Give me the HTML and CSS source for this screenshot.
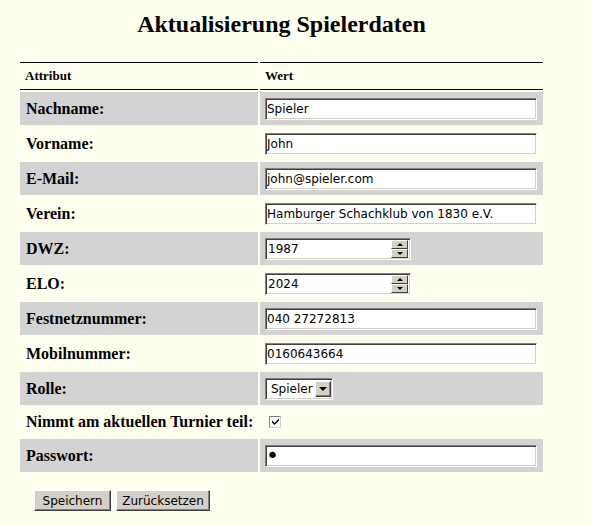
FILE: index.html
```html
<!DOCTYPE html>
<html lang="de">
<head>
<meta charset="utf-8">
<title>Aktualisierung Spielerdaten</title>
<link rel="stylesheet" href="styles.css">
</head>
<body>
<div class="page">
  <h1 class="title">Aktualisierung Spielerdaten</h1>
  <form class="form">
    <table class="data">
      <colgroup><col class="c1"><col class="c2"></colgroup>
      <thead>
        <tr><th>Attribut</th><th>Wert</th></tr>
      </thead>
      <tbody>
        <tr class="odd"><td class="lbl">Nachname:</td><td><input class="txt" type="text" value="Spieler"></td></tr>
        <tr><td class="lbl">Vorname:</td><td><input class="txt" type="text" value="John"></td></tr>
        <tr class="odd"><td class="lbl">E-Mail:</td><td><input class="txt" type="text" value="john@spieler.com"></td></tr>
        <tr><td class="lbl">Verein:</td><td><input class="txt" type="text" value="Hamburger Schachklub von 1830 e.V."></td></tr>
        <tr class="odd"><td class="lbl">DWZ:</td><td><span class="num"><input class="numin" type="text" value="1987"><span class="spin"><span class="sb"><span class="up"></span></span><span class="sb"><span class="dn"></span></span></span></span></td></tr>
        <tr><td class="lbl">ELO:</td><td><span class="num"><input class="numin" type="text" value="2024"><span class="spin"><span class="sb"><span class="up"></span></span><span class="sb"><span class="dn"></span></span></span></span></td></tr>
        <tr class="odd"><td class="lbl">Festnetznummer:</td><td><input class="txt" type="text" value="040 27272813"></td></tr>
        <tr><td class="lbl">Mobilnummer:</td><td><input class="txt" type="text" value="0160643664"></td></tr>
        <tr class="odd"><td class="lbl">Rolle:</td><td><span class="sel"><span class="selval">Spieler</span><span class="selbtn"><span class="dn"></span></span></span></td></tr>
        <tr class="short"><td class="lbl">Nimmt am aktuellen Turnier teil:</td><td><span class="chk"><svg width="9" height="9" viewBox="0 0 9 9"><path d="M1 3.5 L3.5 6 L8 1.5 L8 3.5 L3.5 8 L1 5.5 Z" fill="#000"/></svg></span></td></tr>
        <tr class="odd"><td class="lbl">Passwort:</td><td><input class="txt pw" type="password" value="x"></td></tr>
      </tbody>
    </table>
    <div class="actions">
      <button class="btn btn-save" type="button">Speichern</button>
      <button class="btn btn-reset" type="reset">Zurücksetzen</button>
    </div>
  </form>
</div>
</body>
</html>
```

FILE: styles.css
```css
html, body {
  margin: 0;
  padding: 0;
  background: #fffff0;
}
body {
  font-family: "Liberation Serif", "Times New Roman", serif;
  color: #000;
}
.page {
  margin-left: 18px;
  width: 527px;
}
.title {
  margin: 0;
  padding-top: 10px;
  height: 50px;
  box-sizing: border-box;
  font-size: 24px;
  line-height: 28px;
  font-weight: bold;
  text-align: center;
}
.form {
  margin: 10px 0 0 0;
}
.data {
  border-collapse: separate;
  border-spacing: 2px;
  width: 527px;
  table-layout: fixed;
}
.c1 { width: 238px; }
.c2 { width: 283px; }
.data th {
  box-sizing: border-box;
  height: 28px;
  padding: 0 5px;
  border-top: 1px solid #000;
  border-bottom: 1px solid #000;
  text-align: left;
  font-size: 13px;
  font-weight: bold;
  vertical-align: middle;
}
.data td {
  height: 33px;
  padding: 0 5px;
  vertical-align: middle;
}
.data tr.short td {
  height: 30px;
}
.data tr.odd td {
  background: #d3d3d3;
}
.data td.lbl {
  padding-left: 6px;
  font-size: 16px;
  font-weight: bold;
  white-space: nowrap;
}
.txt, .numin, .sel, .btn {
  font-family: "DejaVu Sans", Verdana, sans-serif;
  font-size: 12px;
}
.txt {
  display: block;
  box-sizing: border-box;
  width: 272px;
  height: 22px;
  margin: 0;
  padding: 1px 1px 0 1px;
  background: #fff;
  color: #000;
  border: 1px solid;
  border-color: #808080 #fff #fff #808080;
  box-shadow: inset 1px 1px 0 #404040, inset -1px -1px 0 #d4d0c8;
  outline: none;
}
.txt.pw {
  font-family: "DejaVu Sans", sans-serif;
  font-size: 22px;
  line-height: 18px;
  padding: 0 0 0 0;
}
.num {
  display: flex;
  box-sizing: border-box;
  width: 146px;
  height: 22px;
  background: #fff;
  border: 1px solid;
  border-color: #808080 #fff #fff #808080;
  box-shadow: inset 1px 1px 0 #404040, inset -1px -1px 0 #d4d0c8;
  padding: 1px;
}
.numin {
  flex: 1;
  min-width: 0;
  border: 0;
  margin: 0;
  padding: 1px 0 0 1px;
  background: transparent;
  outline: none;
  color: #000;
}
.spin {
  display: flex;
  flex-direction: column;
  justify-content: center;
  width: 17px;
  margin-right: 1px;
}
.sb {
  display: flex;
  align-items: center;
  justify-content: center;
  box-sizing: border-box;
  height: 9px;
  background: #d4d0c8;
  border: 1px solid;
  border-color: #fff #404040 #404040 #fff;
}
.up, .dn {
  width: 0;
  height: 0;
  border-left: 3px solid transparent;
  border-right: 3px solid transparent;
}
.up { border-bottom: 3px solid #000; }
.dn { border-top: 3px solid #000; }
.sel {
  display: inline-flex;
  box-sizing: border-box;
  height: 22px;
  padding: 1px;
  background: #fff;
  border: 1px solid;
  border-color: #808080 #fff #fff #808080;
  box-shadow: inset 1px 1px 0 #404040, inset -1px -1px 0 #d4d0c8;
  vertical-align: middle;
}
.selval {
  display: flex;
  align-items: center;
  padding: 1px 2px 0 4px;
  font-size: 12px;
}
.selbtn {
  display: flex;
  align-items: center;
  justify-content: center;
  box-sizing: border-box;
  width: 16px;
  height: 16px;
  margin-top: 1px;
  background: #d4d0c8;
  border: 1px solid;
  border-color: #fff #404040 #404040 #fff;
  box-shadow: inset -1px -1px 0 #808080;
}
.selbtn .dn {
  border-left-width: 4px;
  border-right-width: 4px;
  border-top-width: 4px;
}
.chk {
  display: flex;
  align-items: center;
  justify-content: center;
  box-sizing: border-box;
  width: 12px;
  height: 12px;
  margin-left: 4px;
  margin-top: -1px;
  background: #fff;
  border: 1px solid;
  border-color: #808080 #d4d0c8 #d4d0c8 #808080;
}
.actions {
  margin-top: 16px;
  padding-left: 16px;
  display: flex;
  gap: 5px;
}
.btn {
  box-sizing: border-box;
  height: 21px;
  margin: 0;
  padding: 0;
  text-align: center;
  background: #d4d0c8;
  color: #000;
  border: 1px solid;
  border-color: #fff #404040 #404040 #fff;
  box-shadow: inset -1px -1px 0 #808080;
  border-radius: 0;
}
.btn-save { width: 77px; }
.btn-reset { width: 94px; }
```
